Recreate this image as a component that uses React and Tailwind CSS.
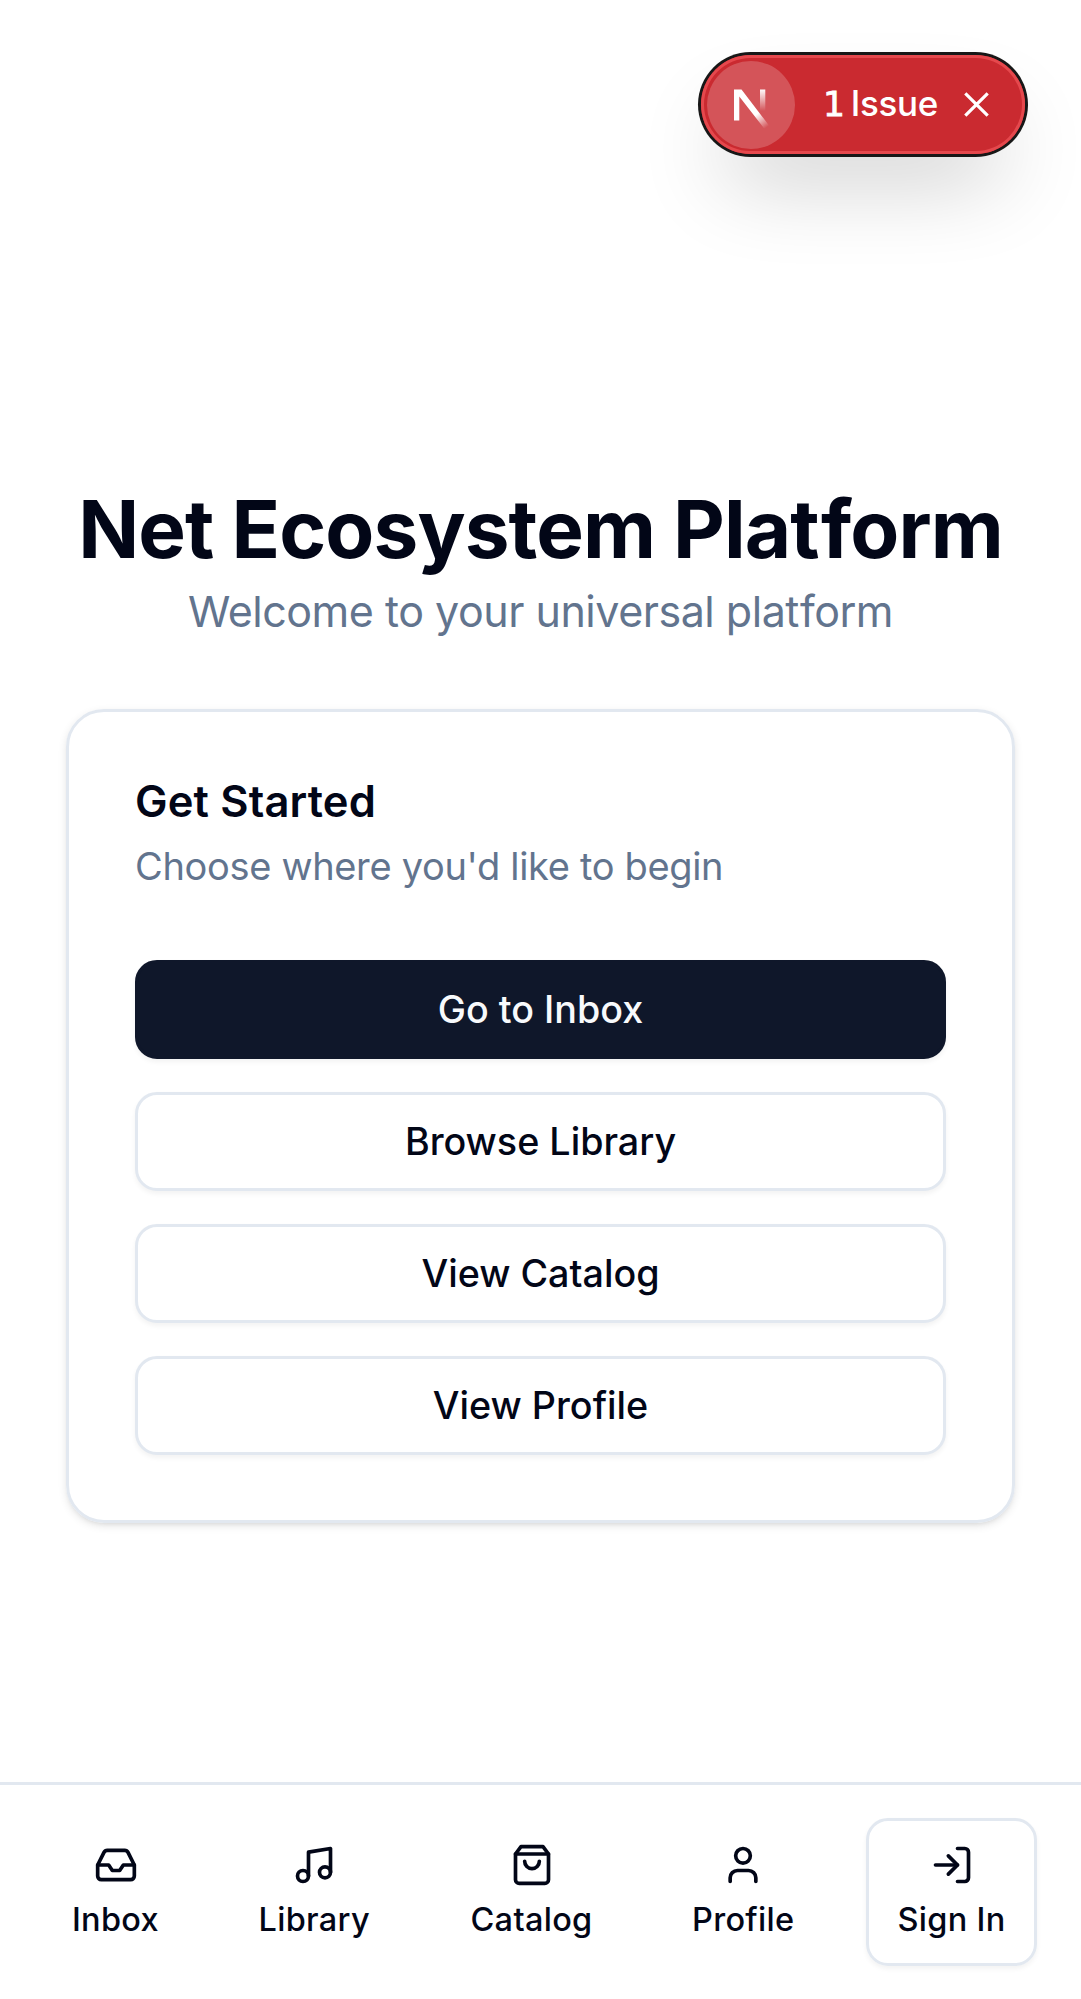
import { Inbox, LogIn, Music, User } from "lucide-react";

const actions = [
  { label: "Go to Inbox", style: "border-[#0f172a] bg-[#0f172a] text-slate-50" },
  { label: "Browse Library", style: "border-slate-200 bg-white text-[#020617]" },
  { label: "View Catalog", style: "border-slate-200 bg-white text-[#020617]" },
  { label: "View Profile", style: "border-slate-200 bg-white text-[#020617]" },
];

function BagIcon() {
  return (
    <svg width="44" height="44" viewBox="0 0 24 24" fill="none" stroke="currentColor" strokeWidth="2" strokeLinecap="round" strokeLinejoin="round">
      <path d="M6 2 3 6v14a2 2 0 0 0 2 2h14a2 2 0 0 0 2-2V6l-3-4Z" />
      <path d="M3 6h18" />
      <path d="M16 10a4 4 0 0 1-8 0" />
    </svg>
  );
}

const tabs = [
  { label: "Inbox", icon: <Inbox size={44} />, style: "w-[141px] border-transparent" },
  { label: "Library", icon: <Music size={44} />, style: "w-[180px] border-transparent" },
  { label: "Catalog", icon: <BagIcon />, style: "w-[178px] border-transparent" },
  { label: "Profile", icon: <User size={44} />, style: "w-[169px] border-transparent" },
  {
    label: "Sign In",
    icon: <LogIn size={44} />,
    style: "w-[171px] border-slate-200 shadow-[0_3px_5px_0_rgba(0,0,0,0.05)]",
  },
];

function IssueBadge() {
  return (
    <div className="absolute top-[55px] right-[56px] flex h-[99px] w-[324px] items-center rounded-full bg-[#ca2a30] pl-[6px] text-white shadow-[0_0_0_3px_#171717,inset_0_0_0_3px_#e5484d,0_44px_88px_-22px_rgba(0,0,0,0.24)]">
      <div className="flex size-[88px] items-center justify-center rounded-full bg-white/20">
        <svg width="88" height="88" viewBox="0 0 88 88" fill="none">
          <defs>
            <linearGradient id="diag" x1="50" y1="53" x2="59.5" y2="66.5" gradientUnits="userSpaceOnUse">
              <stop stopColor="#fff" />
              <stop offset="0.6" stopColor="#fff" stopOpacity="0.4" />
              <stop offset="1" stopColor="#fff" stopOpacity="0" />
            </linearGradient>
            <linearGradient id="stem" x1="55" y1="28" x2="55" y2="50" gradientUnits="userSpaceOnUse">
              <stop stopColor="#fff" />
              <stop offset="1" stopColor="#fff" stopOpacity="0" />
            </linearGradient>
          </defs>
          <path d="M27 28.5h7.5L62 64.5l-4.5 3.5L32.3 35.5V59.5H27Z" fill="url(#diag)" />
          <path d="M53 28.5h5.3V51H53Z" fill="url(#stem)" />
        </svg>
      </div>
      <span className="mb-[3px] ml-[28px] text-[35px] leading-[44px] font-medium tracking-[-0.3px] whitespace-nowrap [word-spacing:-3px]">
        <span className="font-['DejaVu_Sans',sans-serif] text-[34.5px] leading-none font-normal [-webkit-text-stroke:0.8px_white]">1</span> Issue
      </span>
      <svg className="absolute top-[36px] left-[262px]" width="27" height="27" viewBox="0 0 27 27" fill="none" stroke="currentColor" strokeWidth="3.2">
        <path d="M2.3 2.3 24.7 24.7M24.7 2.3 2.3 24.7" />
      </svg>
    </div>
  );
}

export default function App() {
  return (
    <div className="relative flex h-[1999px] w-[1081px] flex-col overflow-hidden bg-white font-['Inter',sans-serif] text-[#020617]">
      <IssueBadge />

      <main className="flex flex-1 flex-col px-[66px] pt-[479px]">
        <h1 className="text-center text-[80px] leading-[99px] font-bold tracking-[-0.9px] whitespace-nowrap">
          Net Ecosystem Pla<span className="tracking-[1.4px]">t</span>form
        </h1>
        <p className="text-center text-[43px] leading-[66px] tracking-[-0.48px] text-slate-500">
          Welcome to your universal pla<span className="tracking-[0.6px]">t</span>form
        </p>

        <section className="mt-[65px] flex h-[814px] flex-col rounded-[38px] border-3 border-slate-200 p-[66px] shadow-[0_3px_8px_0_rgba(0,0,0,0.1),0_3px_5px_-3px_rgba(0,0,0,0.1)]">
          <h2 className="text-[43.5px] leading-[46px] font-semibold tracking-[0.15px]">Get Started</h2>
          <p className="mt-[15px] text-[38px] leading-[55px] tracking-[-0.33px] text-slate-500">Choose where you'd like to begin</p>
          <div className="mt-[66px] flex flex-col gap-[33px]">
            {actions.map(({ label, style }) => (
              <button
                key={label}
                className={`flex h-[99px] items-center justify-center rounded-[22px] border-3 text-[37.7px] font-medium shadow-[0_3px_5px_0_rgba(0,0,0,0.05)] ${style}`}
              >
                {label}
              </button>
            ))}
          </div>
        </section>
      </main>

      <nav className="flex h-[217px] justify-between border-t-3 border-slate-200 pt-[33px] pr-[44px] pl-[45px]">
        {tabs.map(({ label, icon, style }) => (
          <button key={label} className={`flex h-[148px] flex-col items-center gap-[11px] rounded-[22px] border-3 pt-[22px] ${style}`}>
            {icon}
            <span className="text-[32.5px] leading-[44px] font-medium tracking-[0.3px] whitespace-nowrap">{label}</span>
          </button>
        ))}
      </nav>
    </div>
  );
}
